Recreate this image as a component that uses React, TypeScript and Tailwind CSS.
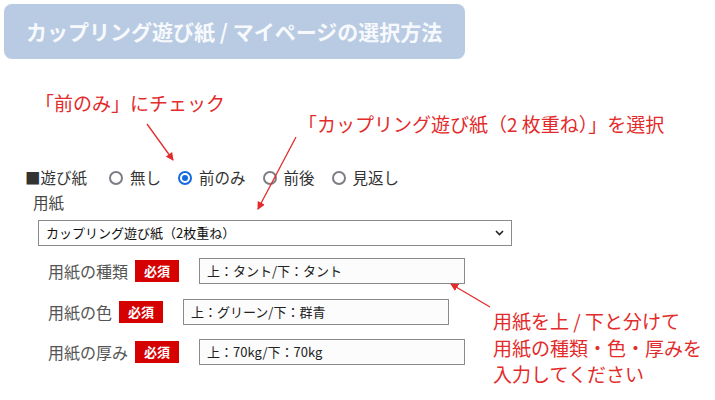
import React from "react";

const font = { fontFamily: '"Noto Sans CJK JP", "Noto Sans", sans-serif' };

function Radio({ label, checked = false }: { label: string; checked?: boolean }) {
  return (
    <div className="flex items-center">
      {checked ? (
        <span className="flex h-[14px] w-[14px] items-center justify-center rounded-full border-[2px] border-[#1469e0]">
          <span className="h-[6px] w-[6px] rounded-full bg-[#1469e0]" />
        </span>
      ) : (
        <span className="h-[14px] w-[14px] rounded-full border-[2px] border-[#7d7d86]" />
      )}
      <span className="ml-[7px]">{label}</span>
    </div>
  );
}

function Field({ label, value, width = "w-[266px]" }: { label: string; value: string; width?: string }) {
  return (
    <div className="flex items-center">
      <span className="text-[16px] leading-[24px] text-[#555]">{label}</span>
      <span className="ml-[7px] flex h-[22px] w-[44px] items-center justify-center bg-[#d50000] text-[13px] font-bold text-white">
        必須
      </span>
      <div
        className={`ml-[20px] flex h-[26px] ${width} items-center border border-[#8a8a8a] bg-[#fcfcfc] pl-[7px] text-[13px] text-[#222]`}
      >
        {value}
      </div>
    </div>
  );
}

export default function App() {
  return (
    <div className="relative h-[400px] w-[715px] overflow-hidden bg-white" style={font}>
      {/* Title */}
      <div className="ml-[4px] mt-[4px] flex h-[55px] w-[461px] items-center rounded-[8px] bg-[#b8cbe3] pl-[22px] text-[21px] font-bold text-[#f7f9fc]">
        カップリング遊び紙 / マイページの選択方法
      </div>

      {/* Callouts */}
      <div className="mt-[33px] pl-[35px] text-[19px] leading-[21px] text-[#e32b2b]">「前のみ」にチェック</div>
      <div className="pl-[298px] text-[19px] leading-[21px] text-[#e32b2b]">
        「カップリング遊び紙（2 枚重ね）」を選択
      </div>

      {/* 遊び紙 radios */}
      <div className="mt-[32px] flex h-[24px] items-center pl-[25px] text-[15.5px] text-[#333]">
        <span>■遊び紙</span>
        <div className="ml-[22px] flex items-center gap-[17px]">
          <Radio label="無し" />
          <Radio label="前のみ" checked />
          <Radio label="前後" />
          <Radio label="見返し" />
        </div>
      </div>
      <div className="pl-[33px] text-[15.5px] leading-[24px] text-[#444]">用紙</div>

      {/* Select */}
      <div className="ml-[38px] mt-[6px] flex h-[26px] w-[474px] items-center justify-between border border-[#8a8a8a] bg-white pl-[7px] pr-[7px] text-[13px] text-[#111]">
        <span>カップリング遊び紙（2枚重ね）</span>
        <svg width="9" height="6" viewBox="0 0 9 6">
          <path d="M1 1l3.5 3.5L8 1" fill="none" stroke="#222" strokeWidth="1.6" />
        </svg>
      </div>

      {/* Paper fields + note */}
      <div className="mt-[12px] flex">
        <div className="ml-[48px] flex flex-col">
          <Field label="用紙の種類" value="上：タント/下：タント" />
          <div className="mt-[15px]">
            <Field label="用紙の色" value="上：グリーン/下：群青" />
          </div>
          <div className="mt-[14px]">
            <Field label="用紙の厚み" value="上：70kg/下：70kg" />
          </div>
        </div>
        <div className="ml-[28px] mt-[50px] text-[19px] leading-[26.5px] text-[#e32b2b]">
          <div>用紙を上 / 下と分けて</div>
          <div>用紙の種類・色・厚みを</div>
          <div>入力してください</div>
        </div>
      </div>

      {/* Arrows */}
      <svg className="pointer-events-none absolute left-0 top-0" width="715" height="400">
        <defs>
          <marker id="ah" markerWidth="8" markerHeight="8" refX="7" refY="4" orient="auto" markerUnits="userSpaceOnUse">
            <path d="M0 0L8 4L0 8z" fill="#e32b2b" />
          </marker>
        </defs>
        <line x1="147" y1="124" x2="173" y2="160" stroke="#e32b2b" strokeWidth="1.3" markerEnd="url(#ah)" />
        <line x1="296" y1="137" x2="258" y2="209" stroke="#e32b2b" strokeWidth="1.3" markerEnd="url(#ah)" />
        <line x1="490" y1="307" x2="451" y2="284" stroke="#e32b2b" strokeWidth="1.3" markerEnd="url(#ah)" />
      </svg>
    </div>
  );
}
